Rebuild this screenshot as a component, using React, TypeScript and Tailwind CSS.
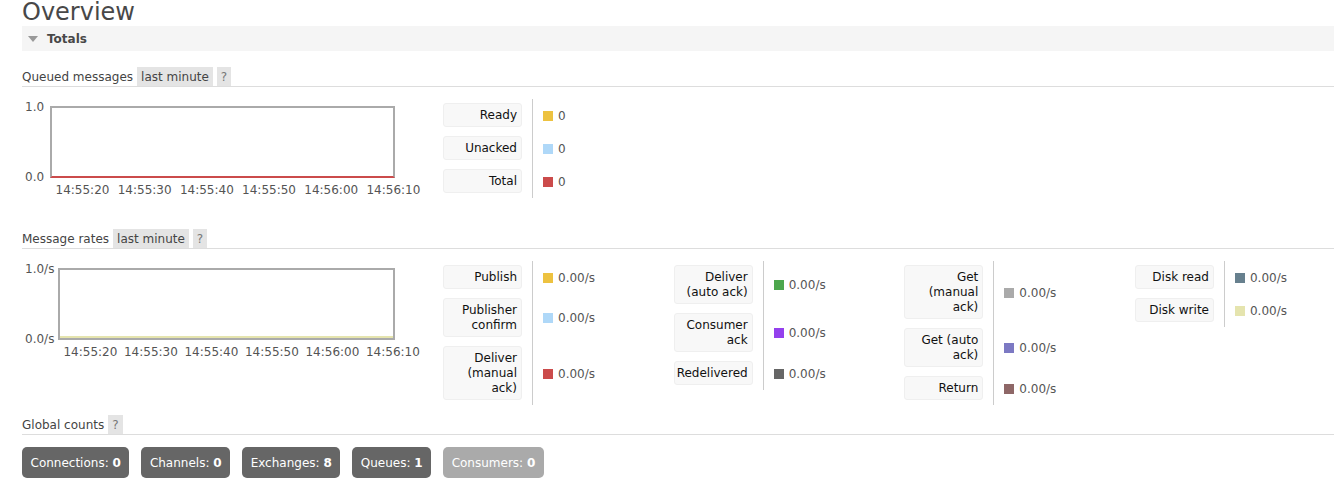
import React from "react";

type Row = { label: string; value: string; color: string };

function Legend({ cols }: { cols: Row[][] }) {
  return (
    <div className="flex">
      {cols.map((rows, ci) => (
        <div key={ci} className="flex w-[230.67px] shrink-0 flex-col">
          {rows.map((r) => (
            <div key={r.label} className="flex">
              <div className="w-[79px] shrink-0 pt-[4px] pb-[5px]">
                <div className="rounded-[3px] border border-[#efefef] bg-[#f8f8f8] py-[3.5px] pr-[4px] text-right leading-[15px] text-[#111]">
                  {r.label}
                </div>
              </div>
              <div className="ml-[10px] flex items-center gap-[5px] border-l border-[#cccccc] pl-[10px] text-[#555]">
                <span className={`h-[10px] w-[10px] ${r.color}`} />
                <span className="leading-[14px]">{r.value}</span>
              </div>
            </div>
          ))}
        </div>
      ))}
    </div>
  );
}

function Header({ title, badges }: { title: string; badges: string[] }) {
  return (
    <div className="flex items-center gap-[4px] border-b border-[#dddddd] text-[#444]">
      <span className="leading-[14px]">{title}</span>
      {badges.map((b) => (
        <span
          key={b}
          className={`bg-[#e4e4e4] px-[4px] py-[2.5px] leading-[14px] ${b === "?" ? "text-[#777]" : "text-[#444]"}`}
        >
          {b}
        </span>
      ))}
    </div>
  );
}

const times = ["14:55:20", "14:55:30", "14:55:40", "14:55:50", "14:56:00", "14:56:10"];

function QueuedChart() {
  return (
    <div className="h-[120px] w-[421px] shrink-0 pt-[7px]">
      <div className="flex">
        <div className="-my-[6px] flex h-[84px] w-[28px] shrink-0 flex-col justify-between pl-[3px] leading-[14px] text-[#545454]">
          <span>1.0</span>
          <span>0.0</span>
        </div>
        <div className="h-[72px] w-[345px] border-2 border-[#aaaaaa] border-b-[#cb4b4b]" />
      </div>
      <div className="mt-[5px] ml-[29.4px] flex leading-[14px] text-[#545454]">
        {times.map((t) => (
          <span key={t} className="w-[62.2px] shrink-0 text-center">
            {t}
          </span>
        ))}
      </div>
    </div>
  );
}

function RatesChart() {
  return (
    <div className="h-[120px] w-[421px] shrink-0 pt-[7px]">
      <div className="flex">
        <div className="-my-[6px] flex h-[84px] w-[36px] shrink-0 flex-col justify-between pl-[3px] leading-[14px] text-[#545454]">
          <span>1.0/s</span>
          <span>0.0/s</span>
        </div>
        <div className="flex h-[72px] w-[337px] flex-col justify-end border-2 border-[#aaaaaa]">
          <div className="h-[2px] bg-[#e5e4ae]" />
        </div>
      </div>
      <div className="mt-[5px] ml-[38.2px] flex leading-[14px] text-[#545454]">
        {times.map((t) => (
          <span key={t} className="w-[60.5px] shrink-0 text-center">
            {t}
          </span>
        ))}
      </div>
    </div>
  );
}

const queued: Row[][] = [
  [
    { label: "Ready", value: "0", color: "bg-[#edc240]" },
    { label: "Unacked", value: "0", color: "bg-[#afd8f8]" },
    { label: "Total", value: "0", color: "bg-[#cb4b4b]" },
  ],
];

const rates: Row[][] = [
  [
    { label: "Publish", value: "0.00/s", color: "bg-[#edc240]" },
    { label: "Publisher confirm", value: "0.00/s", color: "bg-[#afd8f8]" },
    { label: "Deliver (manual ack)", value: "0.00/s", color: "bg-[#cb4b4b]" },
  ],
  [
    { label: "Deliver (auto ack)", value: "0.00/s", color: "bg-[#4da74d]" },
    { label: "Consumer ack", value: "0.00/s", color: "bg-[#9440ed]" },
    { label: "Redelivered", value: "0.00/s", color: "bg-[#666666]" },
  ],
  [
    { label: "Get (manual ack)", value: "0.00/s", color: "bg-[#aaaaaa]" },
    { label: "Get (auto ack)", value: "0.00/s", color: "bg-[#7c79c3]" },
    { label: "Return", value: "0.00/s", color: "bg-[#8e6767]" },
  ],
  [
    { label: "Disk read", value: "0.00/s", color: "bg-[#67808e]" },
    { label: "Disk write", value: "0.00/s", color: "bg-[#e5e4ae]" },
  ],
];

const counts = [
  { name: "Connections", n: "0", bg: "bg-[#666666]" },
  { name: "Channels", n: "0", bg: "bg-[#666666]" },
  { name: "Exchanges", n: "8", bg: "bg-[#666666]" },
  { name: "Queues", n: "1", bg: "bg-[#666666]" },
  { name: "Consumers", n: "0", bg: "bg-[#aaaaaa]" },
];

export default function App() {
  return (
    <div className="min-h-[487px] w-full overflow-hidden bg-white pl-[22px] font-['DejaVu_Sans',Verdana,sans-serif] text-[12px]">
      <h1 className="text-[24px] leading-[24px] font-normal text-[#484848]">Overview</h1>
      <div className="mt-[2px] flex h-[25px] items-center bg-[#f5f5f5]">
        <svg width="10" height="6" viewBox="0 0 10 6" className="ml-[6px] shrink-0">
          <polygon points="0,0 10,0 5,6" fill="#999999" />
        </svg>
        <span className="ml-[9px] font-bold text-[#484848]">Totals</span>
      </div>

      <div className="mt-[16px]">
        <Header title="Queued messages" badges={["last minute", "?"]} />
      </div>
      <div className="mt-[12px] flex">
        <QueuedChart />
        <Legend cols={queued} />
      </div>

      <div className="mt-[10px]">
        <Header title="Message rates" badges={["last minute", "?"]} />
      </div>
      <div className="mt-[12px] flex">
        <RatesChart />
        <Legend cols={rates} />
      </div>

      <div className="mt-[10px]">
        <Header title="Global counts" badges={["?"]} />
      </div>
      <div className="mt-[12px] flex gap-[12px]">
        {counts.map((c) => (
          <div
            key={c.name}
            className={`flex h-[31px] items-center rounded-[5px] px-[8.5px] leading-[14px] text-white ${c.bg}`}
          >
            {c.name}:&nbsp;<b>{c.n}</b>
          </div>
        ))}
      </div>
    </div>
  );
}
